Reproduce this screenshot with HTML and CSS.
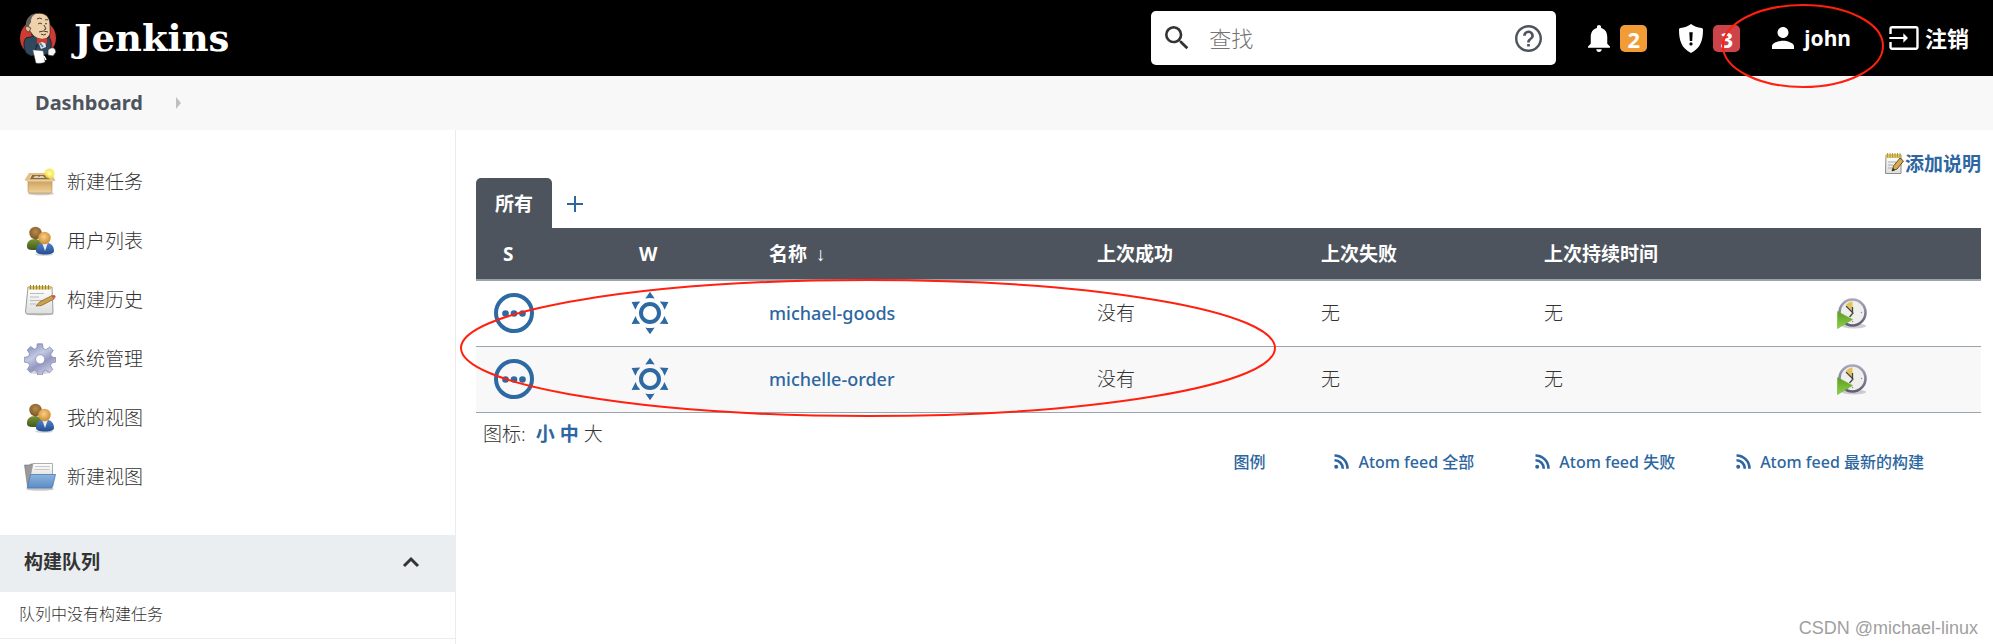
FILE: index.html
```html
<!DOCTYPE html>
<html lang="zh-CN">
<head>
<meta charset="utf-8">
<title>Dashboard [Jenkins]</title>
<link rel="stylesheet" href="styles.css">
</head>
<body>
<svg class="defs" aria-hidden="true">
  <defs>
    <linearGradient id="box-front" x1="0" y1="0" x2="0" y2="1"><stop offset="0" stop-color="#c59a55"/><stop offset="0.5" stop-color="#dcb676"/><stop offset="1" stop-color="#efd3a0"/></linearGradient>
    <radialGradient id="head-dark" cx="0.5" cy="0.4" r="0.6"><stop offset="0" stop-color="#b98b4c"/><stop offset="1" stop-color="#7a5724"/></radialGradient>
    <radialGradient id="head-light" cx="0.45" cy="0.4" r="0.6"><stop offset="0" stop-color="#f7cf8b"/><stop offset="1" stop-color="#cf8a2c"/></radialGradient>
    <linearGradient id="shirt-green" x1="0" y1="0" x2="0" y2="1"><stop offset="0" stop-color="#7c9438"/><stop offset="1" stop-color="#41591a"/></linearGradient>
    <linearGradient id="shirt-blue" x1="0" y1="0" x2="0" y2="1"><stop offset="0" stop-color="#5583c6"/><stop offset="1" stop-color="#234d92"/></linearGradient>
    <radialGradient id="glow"><stop offset="0" stop-color="#fffef0"/><stop offset="0.35" stop-color="#fff46a"/><stop offset="0.75" stop-color="#f5e555" stop-opacity="0.8"/><stop offset="1" stop-color="#f5e555" stop-opacity="0"/></radialGradient>
    <linearGradient id="gear-fill" x1="0" y1="0" x2="0.6" y2="1"><stop offset="0" stop-color="#6d84b4"/><stop offset="0.45" stop-color="#c3c9e2"/><stop offset="0.7" stop-color="#9498c2"/><stop offset="1" stop-color="#c8cae2"/></linearGradient>
    <linearGradient id="folder-front" x1="0" y1="0" x2="0" y2="1"><stop offset="0" stop-color="#8db4dd"/><stop offset="1" stop-color="#5b8cc6"/></linearGradient>
    <linearGradient id="paper" x1="0" y1="0" x2="0" y2="1"><stop offset="0" stop-color="#ffffff"/><stop offset="1" stop-color="#dededc"/></linearGradient>
    <linearGradient id="play" x1="0" y1="0" x2="0" y2="1"><stop offset="0" stop-color="#5a9d22"/><stop offset="1" stop-color="#8ed149"/></linearGradient>
    <linearGradient id="rim" x1="0" y1="0" x2="0" y2="1"><stop offset="0" stop-color="#a8a8bd"/><stop offset="1" stop-color="#5f5d7a"/></linearGradient>
  </defs>
  <symbol id="users" viewBox="0 0 32 32">
    <ellipse cx="20" cy="29.500" rx="9" ry="1.500" fill="#999" opacity="0.4"/>
    <path d="M3 22c-.4-5 2.600-8 8-8 4 0 7 2 7 7l-3 4H8c-3 0-5-1-5-3z" fill="url(#shirt-green)"/>
    <circle cx="11.500" cy="8" r="6.200" fill="url(#head-dark)"/>
    <path d="M12 26c0-5 3-8.500 9-8.500s9 3.500 9 8.500c0 2-3 3.500-9 3.500S12 28 12 26z" fill="url(#shirt-blue)"/>
    <path d="M18 17.500h6L21 26z" fill="#e7edf6"/>
    <circle cx="20.500" cy="13" r="6.200" fill="url(#head-light)"/>
  </symbol>
  <symbol id="status-none" viewBox="0 0 40 40">
    <circle cx="20" cy="20" r="18" fill="none" stroke="currentColor" stroke-width="4"/>
    <circle cx="11.500" cy="20.500" r="3.300"/><circle cx="20" cy="20.500" r="3.300"/><circle cx="28.500" cy="20.500" r="3.300"/>
  </symbol>
  <symbol id="sunny" viewBox="0 0 40 44">
    <circle cx="20" cy="22" r="9" fill="none" stroke="currentColor" stroke-width="4"/>
    <path d="M20 .8l4.700 6.800q-4.700-1.400-9.400 0zM20 43.200l4.700-6.800q-4.700 1.400-9.400 0zM1.600 11l8.700-.4q-3.500 3.500-4.900 8.200zM38.400 11l-8.700-.4q3.500 3.500 4.900 8.200zM1.600 33l8.700-.2q-3.500-3.200-4.700-7.800zM38.400 33l-8.700-.2q3.500-3.200 4.700-7.800z"/>
  </symbol>
  <symbol id="schedule" viewBox="0 0 32 32">
    <ellipse cx="18" cy="29" rx="12" ry="2.500" fill="#888" opacity="0.4"/>
    <circle cx="16.500" cy="15.500" r="13" fill="#efefeb" stroke="url(#rim)" stroke-width="2.600"/>
    <path d="M16.500 15.500L10 7.500q3-3 6.500-3z" fill="#e3c45c"/>
    <path d="M10 9l7 7-3.500 4M16.500 10v5.500" fill="none" stroke="#444" stroke-width="1.300"/>
    <circle cx="25.500" cy="15.500" r=".7" fill="#888"/><circle cx="16.500" cy="24.500" r=".7" fill="#888"/>
    <path d="M1.500 14.500l15 8-15 9z" fill="url(#play)" stroke="#6fae3a" stroke-width=".6"/>
  </symbol>
  <symbol id="rss" viewBox="0 0 15 15">
    <circle cx="2.200" cy="12.800" r="2"/>
    <path d="M.5 6.200A8.300 8.300 0 0 1 8.800 14.800M.5 1.500A13 13 0 0 1 13.500 14.800" fill="none" stroke="currentColor" stroke-width="2.600"/>
  </symbol>
</svg>

<header class="page-header">
  <a class="brand" href="#">
    <svg class="brand-face" viewBox="0 0 38 52" aria-hidden="true">
      <circle cx="19" cy="26" r="18" fill="#cf3a33"/>
      <path d="M7 26c-3 3-2.500 9 0 15l5 3 17-2 3-7c1-5-1-10-4-11l-9-1z" fill="#2f485c" stroke="#101820" stroke-width=".8"/>
      <path d="M12 22l8 5-4 12M31 24l-7 5" fill="none" stroke="#15212b" stroke-width="1"/>
      <path d="M19 29l7-1 1 7-5 2z" fill="#e6edf2"/><path d="M21 31l3 4" stroke="#5d84a5" stroke-width="2"/>
      <path d="M9 17C6 6 13 1 20 1.200c8 0 11 5 11 12 0 6 1 9-2 12-4 4-11 2-15-2l-3-4z" fill="#efd2ac" stroke="#332b22" stroke-width=".8"/>
      <path d="M8.500 20C4 10 9 2 18 1.200c-5 2-6 5-6 9l-2 3 1 6z" fill="#655f5d"/>
      <path d="M8 14c-3 1-1 6 2 6l2-4z" fill="#e7bc93" stroke="#332b22" stroke-width=".7"/>
      <path d="M18 7q3-2 5 0M26 8q2-1 3 0M19 12q2-2 4 0M26 12q1-1 2 0M25 13l2 4-2 1M20 20q4-2 9 0M22 22q3 2 5 0" fill="none" stroke="#332b22" stroke-width=".9"/>
      <path d="M18 26l5 1 5-1v6l-5-2-5 2z" fill="#d33833"/>
      <path d="M14 38l10 1 2 11q-4 2-9 1z" fill="#fff" stroke="#888" stroke-width=".4"/>
      <path d="M29 38q4-4 7-1l1 3-3 4-5-1z" fill="#f5f5f5" stroke="#333" stroke-width=".7"/>
      <path d="M25 44l2 4" stroke="#fff" stroke-width="1.500"/>
    </svg>
    <span class="brand-name">Jenkins</span>
  </a>

  <form class="search" role="search">
    <svg class="search-icon" viewBox="0 0 24 24" aria-hidden="true"><path d="M15.500 14h-.79l-.28-.27A6.471 6.471 0 0 0 16 9.500 6.500 6.500 0 1 0 9.500 16c1.610 0 3.090-.59 4.230-1.570l.27.28v.79l5 4.990L20.490 19l-4.990-5zm-6 0C7.010 14 5 11.990 5 9.500S7.010 5 9.500 5 14 7.010 14 9.500 11.990 14 9.500 14z"/></svg>
    <input class="search-input" type="text" placeholder="查找" aria-label="查找">
    <a class="search-help" href="#" aria-label="帮助">
      <svg viewBox="2 2 20 20"><path d="M11 18h2v-2h-2v2zm1-16C6.480 2 2 6.480 2 12s4.480 10 10 10 10-4.480 10-10S17.520 2 12 2zm0 18.200c-4.510 0-8.200-3.690-8.200-8.200S7.490 3.800 12 3.800s8.200 3.690 8.200 8.200-3.690 8.200-8.200 8.200zm0-14.200c-2.210 0-4 1.790-4 4h2c0-1.100.9-2 2-2s2 .9 2 2c0 2-3 1.750-3 5h2c0-2.250 3-2.500 3-5 0-2.210-1.790-4-4-4z"/></svg>
    </a>
  </form>

  <nav class="user-nav">
    <a class="notice" href="#" aria-label="2">
      <svg class="bell" viewBox="4 2.500 16 19.500"><path d="M12 22c1.100 0 2-.9 2-2h-4c0 1.100.9 2 2 2zm6-6v-5c0-3.070-1.630-5.640-4.500-6.320V4c0-.83-.67-1.500-1.500-1.500s-1.500.67-1.500 1.500v.68C7.640 5.360 6 7.920 6 11v5l-2 2v1h16v-1l-2-2z"/></svg>
      <span class="badge badge-orange">2</span>
    </a>
    <a class="notice" href="#" aria-label="3">
      <svg class="shield" viewBox="0 0 24 29"><path fill-rule="evenodd" d="M12 0c3 2.300 6.500 3.500 10.500 4 .9.100 1.500.7 1.500 1.600 0 11-2.500 18.800-12 23.400C2.500 24.400 0 16.600 0 5.600 0 4.700.6 4.100 1.500 4 5.500 3.500 9 2.300 12 0zM10.300 8.200l.5 8.800h2.400l.5-8.800zM12 18.300a1.600 1.600 0 1 0 0 3.200 1.600 1.600 0 0 0 0-3.200z"/></svg>
      <span class="badge badge-red">3</span>
    </a>
    <a class="account" href="#">
      <svg class="person" viewBox="4 4 16 16"><path d="M12 12c2.210 0 4-1.790 4-4s-1.790-4-4-4-4 1.790-4 4 1.790 4 4 4zm0 2c-2.670 0-8 1.340-8 4v2h16v-2c0-2.660-5.330-4-8-4z"/></svg>
      <span>john</span>
    </a>
    <a class="logout" href="#">
      <svg class="exit" viewBox="1 3 22 18"><path d="M21 3.010H3c-1.100 0-2 .9-2 2V9h1.800V4.800h18.400v14.400H2.800V15H1v4.010c0 1.100.9 1.980 2 1.980h18c1.100 0 2-.88 2-1.980v-14c0-1.110-.9-2-2-2zM11.500 15.500L15 12l-3.500-3.500v2.700H1v1.600h10.500z"/></svg>
      <span>注销</span>
    </a>
  </nav>
</header>

<nav class="breadcrumbs">
  <a class="crumb" href="#">Dashboard</a>
  <span class="crumb-arrow"></span>
</nav>

<div class="page-body">
  <aside class="side-panel">
    <nav class="tasks">
      <a class="task" href="#">
        <svg viewBox="0 0 32 32"><ellipse cx="17" cy="27.500" rx="13" ry="1.800" fill="#777" opacity="0.4"/><path d="M4 13h24v12q0 2-2 2H6q-2 0-2-2z" fill="url(#box-front)" stroke="#b58a48" stroke-width=".6"/><path d="M5 7h22l4.500 7.500-3.500 1.300-3.500-6.800h-17l-3.500 6.500L.5 14z" fill="#e4c086"/><path d="M8 9h16l2 4H6z" fill="#8c6b38"/><path d="M9 12q3-4 6-1 3-3 6 1z" fill="#d9d0bf"/><path d="M4 13.500h24v2H4z" fill="#ead0a0"/><circle cx="25.500" cy="7.500" r="5.800" fill="url(#glow)"/></svg>
        <span>新建任务</span>
      </a>
      <a class="task" href="#"><svg><use href="#users"/></svg><span>用户列表</span></a>
      <a class="task" href="#">
        <svg viewBox="0 0 32 32"><ellipse cx="16" cy="30" rx="14" ry="1.500" fill="#777" opacity="0.4"/><path d="M4 3h24l1 25q0 2-2 2H4q-2.500 0-2.500-2z" fill="url(#paper)" stroke="#9a9a98"/><path d="M5 2h22v3.500H5z" fill="#d5c26a"/><path d="M6.500 1v4.500M9.500 1v4.500M12.500 1v4.500M15.500 1v4.500M18.500 1v4.500M21.500 1v4.500M24.500 1v4.500" stroke="#9b852c" stroke-width="1"/><path d="M6 9.500h14M6 13h9M6 16.500h14M6 20h6" stroke="#bbb" stroke-width="1.200"/><path d="M12 22l3.500-4L28 11.500l2 3.500-12.500 6.500z" fill="#cfa04a" stroke="#7d5a20" stroke-width=".7"/><path d="M28 11.500q3.500-1.500 3.700 1.500l-1.700 2z" fill="#d9534f"/></svg>
        <span>构建历史</span>
      </a>
      <a class="task" href="#">
        <svg viewBox="0 0 32 32"><ellipse cx="16" cy="29" rx="11" ry="2" fill="#777" opacity="0.3"/><path fill-rule="evenodd" d="M13.300.8h5.200l.7 4.700 2.600 1.200 4-2.800 3.400 3.500-2.500 4 1.200 2.500 4 .9v4.200l-4.300 1-1.100 2.600 2.300 4-3.200 3-3.900-2.300-2.500 1.200-.9 3.500h-4.500l-1-3.700-2.600-1.100-3.800 2.300-3.100-3.100 2.400-3.900-1.200-2.600L.2 19v-4.600l4.300-1 1.100-2.600L3.200 7l3.500-3.400 3.800 2.600 2.300-1.100zM16.200 11.700a4.600 4.600 0 1 0 0 9.200 4.600 4.600 0 0 0 0-9.200z" fill="url(#gear-fill)" stroke="#7d82ab" stroke-width=".7"/></svg>
        <span>系统管理</span>
      </a>
      <a class="task" href="#"><svg><use href="#users"/></svg><span>我的视图</span></a>
      <a class="task" href="#">
        <svg viewBox="0 0 32 32"><ellipse cx="16" cy="28" rx="14" ry="1.800" fill="#777" opacity="0.4"/><path d="M.5 4h5l1-1h5l-5 22.500H3.500z" fill="#9a9a9a" stroke="#777" stroke-width=".6"/><path d="M9 2.500h19.500v14H6z" fill="url(#paper)" stroke="#999" stroke-width=".8"/><path d="M11 5.500h15M10.500 8.500h15" stroke="#c8c8c8"/><path d="M6.500 13.500h25l-3 12.500q-.4 1-1.500 1H3.200z" fill="url(#folder-front)" stroke="#4b79b2" stroke-width=".8"/></svg>
        <span>新建视图</span>
      </a>
    </nav>
    <section class="queue">
      <div class="queue-head">
        <h2 class="queue-title">构建队列</h2>
        <button class="collapse" type="button" aria-label="收起">
          <svg viewBox="0 0 18 12"><path d="M2 10l7-7 7 7" fill="none" stroke="#333" stroke-width="3"/></svg>
        </button>
      </div>
      <p class="queue-empty">队列中没有构建任务</p>
    </section>
  </aside>

  <main class="main-panel">
    <div class="description">
      <a class="description-link" href="#">
        <svg viewBox="0 0 20 22"><path d="M2 2h15v18.500H1.500z" fill="url(#paper)" stroke="#8c8c8a"/><path d="M2 1h15v4H2z" fill="#dcc468"/><path d="M3.500 0v4.500M6 0v4.500M8.500 0v4.500M11 0v4.500M13.500 0v4.500M16 0v4.500" stroke="#a48c30" stroke-width=".8"/><path d="M4 9h8M4 12h5M4 15h4" stroke="#aaa"/><path d="M8 18l1.500-5L16 5l3.500 3L13 16z" fill="#d8ac4e" stroke="#574116" stroke-width=".9"/><path d="M8 18l1-3 2 2z" fill="#222"/></svg>
        <span>添加说明</span>
      </a>
    </div>
    <div class="tabs">
      <a class="tab" href="#">所有</a>
      <a class="tab-add" href="#" aria-label="新建视图"><svg viewBox="0 0 16 16"><path d="M8 0v16M0 8h16" stroke="currentColor" stroke-width="2"/></svg></a>
    </div>
    <table class="jobs">
      <colgroup><col class="col-status"><col class="col-weather"><col><col class="col-success"><col class="col-failure"><col class="col-duration"><col class="col-action"></colgroup>
      <thead>
        <tr><th class="th-icon">S</th><th class="th-icon">W</th><th>名称 <span class="sort">↓</span></th><th>上次成功</th><th>上次失败</th><th>上次持续时间</th><th></th></tr>
      </thead>
      <tbody>
        <tr>
          <td><svg class="status"><use href="#status-none"/></svg></td>
          <td><svg class="weather"><use href="#sunny"/></svg></td>
          <td><a class="job" href="#">michael-goods</a></td>
          <td>没有</td><td>无</td><td>无</td>
          <td><button class="build" type="button" aria-label="构建"><svg><use href="#schedule"/></svg></button></td>
        </tr>
        <tr>
          <td><svg class="status"><use href="#status-none"/></svg></td>
          <td><svg class="weather"><use href="#sunny"/></svg></td>
          <td><a class="job" href="#">michelle-order</a></td>
          <td>没有</td><td>无</td><td>无</td>
          <td><button class="build" type="button" aria-label="构建"><svg><use href="#schedule"/></svg></button></td>
        </tr>
      </tbody>
    </table>
    <div class="icon-size">
      <span class="icon-size-label">图标:</span>
      <a href="#">小</a>
      <a href="#">中</a>
      <span>大</span>
    </div>
    <div class="feeds">
      <a class="legend" href="#">图例</a>
      <a href="#"><svg><use href="#rss"/></svg>Atom feed 全部</a>
      <a href="#"><svg><use href="#rss"/></svg>Atom feed 失败</a>
      <a href="#"><svg><use href="#rss"/></svg>Atom feed 最新的构建</a>
    </div>
    <svg class="mark mark-jobs" viewBox="0 0 816 138" aria-hidden="true"><ellipse cx="408" cy="69" rx="407" ry="68"/></svg>
  </main>
</div>
<svg class="mark mark-user" viewBox="0 0 162 84" aria-hidden="true"><ellipse cx="81" cy="42" rx="80" ry="41"/></svg>
<div class="watermark">CSDN @michael-linux</div>
</body>
</html>
```
FILE: styles.css
```css
* {
  box-sizing: border-box;
}

body {
  position: relative;
  display: flex;
  flex-direction: column;
  min-height: 100vh;
  margin: 0;
  background: #fff;
  color: #333;
  font-family: "Noto Sans", "Noto Sans CJK SC", sans-serif;
  font-size: 19px;
  font-weight: 300;
  line-height: 28px;
}

a {
  color: #2d66a0;
  text-decoration: none;
}

svg {
  display: block;
  flex: none;
  fill: currentColor;
}

button {
  display: block;
  padding: 0;
  border: 0;
  background: none;
}

.defs {
  position: absolute;
  width: 0;
  height: 0;
}

/* Header */
.page-header {
  display: flex;
  align-items: center;
  height: 76px;
  padding: 0 24px 0 19px;
  background: #000;
}

.page-header a {
  color: #fff;
}

.brand {
  display: flex;
  align-items: center;
  gap: 17px;
  margin-right: auto;
}

.brand-face {
  width: 38px;
  height: 52px;
}

.brand-name {
  font: bold 37px/46px "DejaVu Serif", serif;
}

.search {
  display: flex;
  align-items: center;
  width: 405px;
  height: 54px;
  padding: 0 14px 0 10px;
  border-radius: 5px;
  background: #fff;
}

.search-icon {
  width: 32px;
  height: 32px;
  color: #333;
}

.search-input {
  flex: 1;
  min-width: 0;
  height: 100%;
  padding: 0 0 0 16px;
  border: 0;
  outline: 0;
  background: none;
  font: 300 22px "Noto Sans", "Noto Sans CJK SC", sans-serif;
}

.search-input::placeholder {
  color: #757575;
}

.page-header .search-help {
  color: #4d545d;
}

.search-help svg {
  width: 27px;
  height: 27px;
}

.user-nav {
  display: flex;
  align-items: center;
  gap: 32px;
  margin-left: 32px;
  font-size: 22px;
  font-weight: bold;
}

.user-nav a {
  display: flex;
  align-items: center;
  gap: 10px;
}

.user-nav .account {
  font-size: 21px;
}

.user-nav .logout {
  gap: 6px;
  margin-left: 6px;
}

.bell {
  width: 22px;
  height: 27px;
}

.shield {
  width: 24px;
  height: 29px;
}

.person {
  width: 22px;
  height: 22px;
}

.exit {
  width: 30px;
  height: 24px;
}

.badge {
  width: 27px;
  height: 27px;
  border-radius: 5px;
  font-size: 22px;
  line-height: 28px;
  text-align: center;
}

.badge-orange {
  background: #f29c38;
}

.badge-red {
  background: #cc4449;
}

/* Breadcrumbs */
.breadcrumbs {
  display: flex;
  align-items: center;
  gap: 33px;
  height: 54px;
  padding: 0 35px;
  background: #f8f8f8;
}

.crumb {
  color: #4d545d;
  font-size: 20px;
  font-weight: bold;
}

.crumb-arrow {
  border: 6px solid transparent;
  border-right: 0;
  border-left: 5px solid #c0c0c0;
}

/* Side panel */
.page-body {
  display: flex;
  flex: 1;
}

.side-panel {
  flex: 0 0 456px;
  border-right: 1px solid #ececee;
}

.tasks {
  padding: 22px 24px 29px;
}

.task {
  display: flex;
  align-items: center;
  gap: 11px;
  height: 59px;
  color: #333;
}

.task svg {
  width: 32px;
  height: 32px;
}

.queue-head {
  display: flex;
  align-items: center;
  justify-content: space-between;
  height: 57px;
  padding: 0 35px 3px 24px;
  background: #eaeef1;
}

.queue-title {
  margin: 0;
  font-size: 19px;
  line-height: 28px;
}

.collapse {
  color: #333;
}

.collapse svg {
  width: 18px;
  height: 12px;
}

.queue-empty {
  margin: 0;
  padding: 8px 19px 10px;
  border-bottom: 1px solid #ececee;
  font-size: 16px;
}

/* Main panel */
.main-panel {
  position: relative;
  flex: 1;
  min-width: 0;
  padding: 20px 12px 0 20px;
}

.description {
  display: flex;
  justify-content: flex-end;
}

.description-link {
  display: flex;
  align-items: center;
  gap: 1px;
  font-weight: bold;
}

.description-link svg {
  width: 20px;
  height: 22px;
}

.tabs {
  display: flex;
}

.tab {
  padding: 12px 19px 10px;
  border-radius: 5px 5px 0 0;
  background: #4d545d;
  color: #fff;
  font-weight: bold;
}

.tab-add {
  display: flex;
  align-items: center;
  padding: 2px 15px 0;
}

.tab-add svg {
  width: 16px;
  height: 16px;
}

.jobs {
  width: 100%;
  border-collapse: collapse;
  table-layout: fixed;
}

.col-status {
  width: 136px;
}

.col-weather {
  width: 139px;
}

.col-success {
  width: 224px;
}

.col-failure {
  width: 223px;
}

.col-duration {
  width: 292px;
}

.col-action {
  width: 163px;
}

.jobs th,
.jobs td {
  padding: 0 18px;
  text-align: left;
}

.jobs th {
  height: 52px;
  padding-top: 1px;
  background: #4d545d;
  color: #fff;
}

.jobs thead tr {
  border-bottom: 2px solid #9aa5ad;
}

.jobs .th-icon {
  padding-left: 27px;
}

.sort {
  margin-left: 4px;
  font-family: "Liberation Sans", sans-serif;
  font-weight: normal;
}

.jobs td {
  height: 66px;
  border-bottom: 1px solid #9aa5ad;
}

.jobs tbody tr:nth-child(even) {
  background: #f8f8f8;
}

.status {
  width: 40px;
  height: 40px;
  color: #2d6aa3;
}

.weather {
  width: 40px;
  height: 44px;
  color: #2d6aa3;
}

.job {
  font-size: 18px;
  font-weight: 500;
}

.build svg {
  width: 32px;
  height: 32px;
}

.icon-size {
  display: flex;
  gap: 5px;
  padding: 7px 7px 0;
}

.icon-size a {
  font-weight: bold;
}

.icon-size-label {
  margin-right: 5px;
}

.feeds {
  display: flex;
  justify-content: flex-end;
  gap: 61px;
  padding-right: 57px;
  font-size: 16px;
  font-weight: 500;
}

.feeds a {
  display: flex;
  align-items: center;
  gap: 9px;
}

.feeds .legend {
  margin-right: 8px;
}

.feeds svg {
  width: 15px;
  height: 15px;
}

/* Overlays */
.mark {
  position: absolute;
  overflow: visible;
  fill: none;
  stroke: #ff2010;
  stroke-width: 2;
  pointer-events: none;
}

.mark-jobs {
  top: 149px;
  left: 4px;
  width: 816px;
}

.mark-user {
  top: 4px;
  right: 109px;
  width: 162px;
}

.watermark {
  position: absolute;
  right: 15px;
  bottom: 2px;
  color: #a0a0a0;
  font-family: "Liberation Sans", sans-serif;
  font-size: 18px;
}
```
